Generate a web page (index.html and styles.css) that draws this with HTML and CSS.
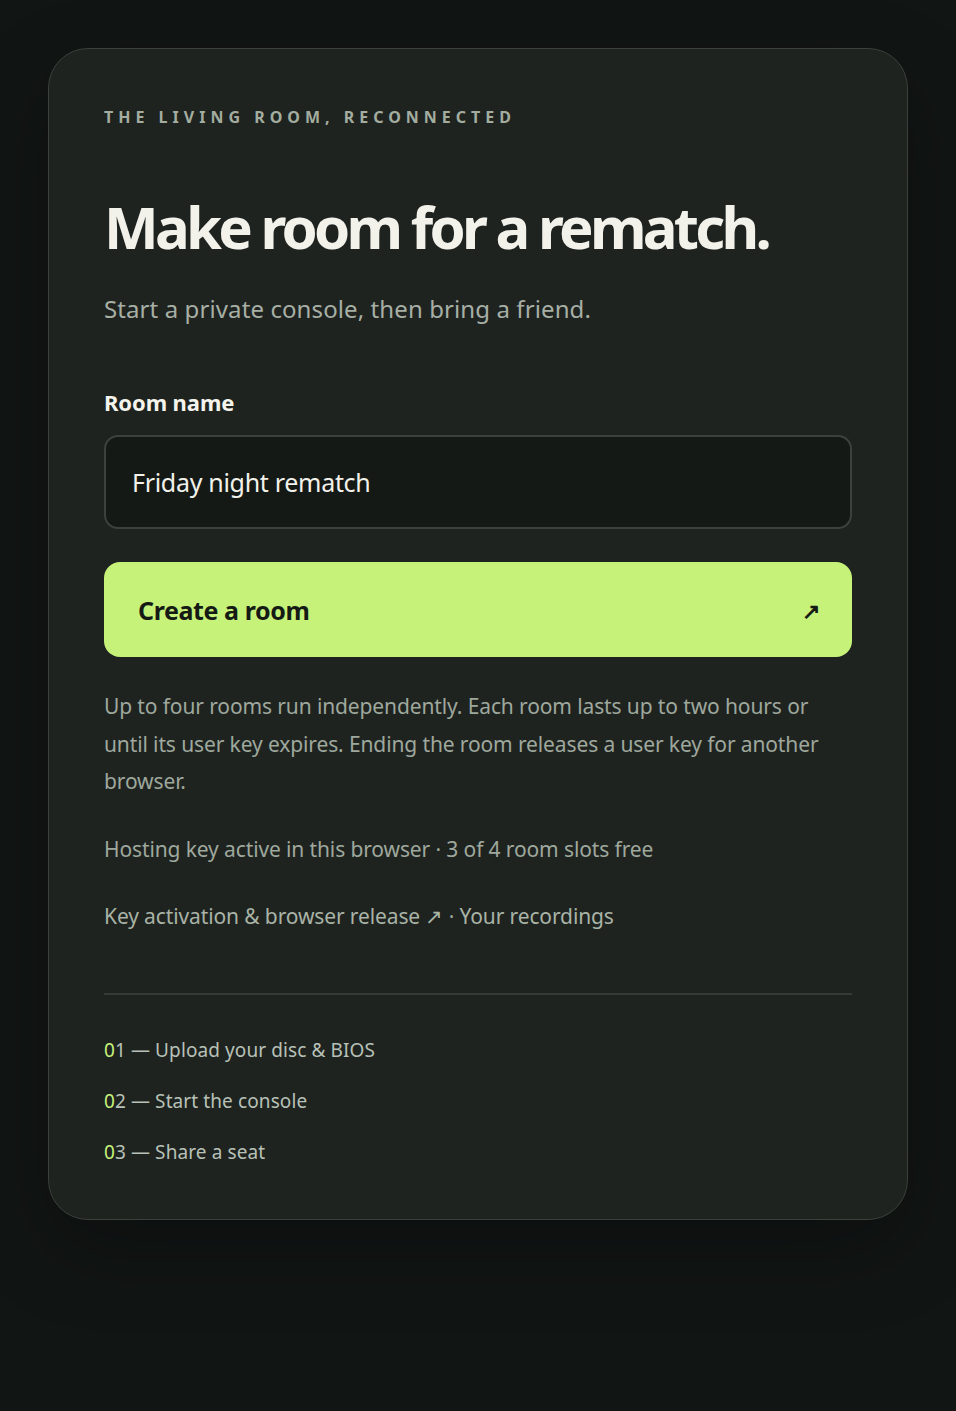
FILE: index.html
```html
<!DOCTYPE html>
<html lang="en">
<head>
<meta charset="utf-8">
<title>Make room for a rematch</title>
<link rel="stylesheet" href="styles.css">
</head>
<body>
<main class="page">
  <section class="card">
    <p class="eyebrow">THE LIVING ROOM, RECONNECTED</p>
    <h1 class="title">Make room for a rematch.</h1>
    <p class="lede">Start a private console, then bring a friend.</p>
    <form class="form">
      <label class="label" for="room">Room name</label>
      <input class="input" id="room" type="text" value="Friday night rematch">
      <button class="cta" type="button"><span>Create a room</span><span class="cta-arrow">↗</span></button>
    </form>
    <p class="note">Up to four rooms run independently. Each room lasts up to two hours or until its user key expires. Ending the room releases a user key for another browser.</p>
    <p class="status">Hosting key active in this browser · 3 of 4 room slots free</p>
    <p class="links"><a href="#">Key activation &amp; browser release ↗</a> · <a href="#">Your recordings</a></p>
    <hr class="rule">
    <ol class="steps">
      <li><span class="num">0</span>1 — Upload your disc &amp; BIOS</li>
      <li><span class="num">0</span>2 — Start the console</li>
      <li><span class="num">0</span>3 — Share a seat</li>
    </ol>
  </section>
</main>
</body>
</html>
```
FILE: styles.css
```css
* { box-sizing: border-box; }
html, body { margin: 0; padding: 0; }
body {
  background: #111514;
  font-family: "Noto Sans", "Open Sans", sans-serif;
  color: #f2f1ea;
  min-height: 1411px;
}
.page {
  padding: 48px 48px 192px;
}
.card {
  background: #1e2320;
  border: 1px solid #3a403b;
  border-radius: 40px;
  padding: 54px 55px 52px;
  box-shadow: 0 30px 80px rgba(0,0,0,0.25);
}
.eyebrow {
  margin: 0;
  font-size: 16px;
  line-height: 28px;
  font-weight: 700;
  letter-spacing: 5px;
  color: #a3ad9f;
}
.title {
  margin: 60px 0 0;
  font-size: 58px;
  line-height: 72px;
  font-weight: 700;
  letter-spacing: -3.72px;
  color: #f2f1ea;
}
.lede {
  margin: 28px 0 0;
  font-size: 24px;
  line-height: 36px;
  color: #a7afa5;
  letter-spacing: 0.1px;
}
.form {
  display: flex;
  flex-direction: column;
  margin-top: 60px;
}
.label {
  font-size: 22px;
  line-height: 30px;
  font-weight: 700;
  letter-spacing: -0.1px;
  color: #f4f3ec;
}
.input {
  margin-top: 18px;
  height: 94px;
  background: #151916;
  border: 2px solid #3b413b;
  border-radius: 14px;
  padding: 0 26px;
  font-family: inherit;
  font-size: 25px;
  letter-spacing: -0.3px;
  color: #f2f1ea;
  outline: none;
}
.cta {
  margin-top: 33px;
  height: 95px;
  display: flex;
  align-items: center;
  justify-content: space-between;
  background: #c6f27a;
  border: 0;
  border-radius: 16px;
  padding: 0 32px 0 34px;
  font-family: inherit;
  font-size: 25px;
  font-weight: 700;
  letter-spacing: -0.4px;
  color: #151b14;
  cursor: pointer;
}
.cta-arrow {
  font-size: 22px;
  font-weight: 700;
}
.note, .status, .links {
  margin: 30px 0 0;
  font-size: 21px;
  line-height: 37.5px;
  color: #9ea89d;
  letter-spacing: -0.12px;
}
.note {
  margin-top: 31px;
}
.links a {
  color: #a9b3a6;
  text-decoration: none;
}
.rule {
  margin: 57px 0 0;
  border: 0;
  border-top: 2px solid #343a35;
}
.steps {
  list-style: none;
  margin: 40px 0 0;
  padding: 0;
  display: flex;
  flex-direction: column;
  gap: 21px;
}
.steps li {
  font-size: 19px;
  line-height: 30px;
  color: #b8c1b7;
  letter-spacing: 0.1px;
}
.num {
  color: #c6f27a;
}
```
